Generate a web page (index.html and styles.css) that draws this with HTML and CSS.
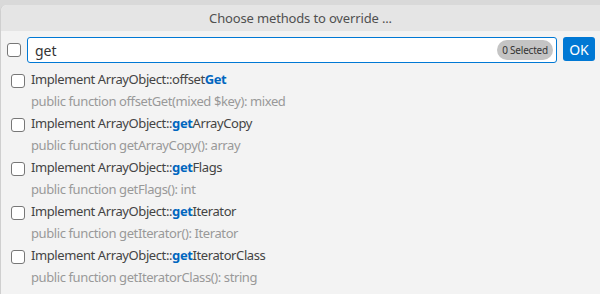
FILE: index.html
```html
<!DOCTYPE html>
<html lang="en">
<head>
  <meta charset="UTF-8" />
  <title>Override methods</title>
  <link rel="stylesheet" href="styles.css">
</head>
<body>

<div class="dialog">
  <div class="header">Choose methods to override ...</div>

  <div class="body">
    <!-- filter row -->
    <div class="search-row">
      <span class="check"></span>
      <div class="search">
        <span class="query">get</span>
        <span class="badge">0 Selected</span>
      </div>
      <button class="ok">OK</button>
    </div>

    <ul class="methods">
      <li>
        <span class="check"></span>
        <div class="info">
          <div class="title">Implement ArrayObject::offset<b>Get</b></div>
          <div class="sig">public function offsetGet(mixed $key): mixed</div>
        </div>
      </li>
      <li>
        <span class="check"></span>
        <div class="info">
          <div class="title">Implement ArrayObject::<b>get</b>ArrayCopy</div>
          <div class="sig">public function getArrayCopy(): array</div>
        </div>
      </li>
      <li>
        <span class="check"></span>
        <div class="info">
          <div class="title">Implement ArrayObject::<b>get</b>Flags</div>
          <div class="sig">public function getFlags(): int</div>
        </div>
      </li>
      <li>
        <span class="check"></span>
        <div class="info">
          <div class="title">Implement ArrayObject::<b>get</b>Iterator</div>
          <div class="sig">public function getIterator(): Iterator</div>
        </div>
      </li>
      <li>
        <span class="check"></span>
        <div class="info">
          <div class="title">Implement ArrayObject::<b>get</b>IteratorClass</div>
          <div class="sig">public function getIteratorClass(): string</div>
        </div>
      </li>
    </ul>
  </div>
</div>

</body>
</html>
```

FILE: styles.css
```css
* {
  margin: 0; padding: 0; box-sizing: border-box;
  font-family: 'Noto Sans', sans-serif;
}

body {
  background: #d9d9d9;
  padding-top: 5px;
  overflow: hidden;
}

.dialog {
  background: #f3f3f3;
  border-left: 1px solid #cfcfcf;
  border-radius: 6px 0 0 0;
  height: 300px;
}

.header {
  height: 26px;
  background: #e5e5e5;
  border-radius: 6px 0 0 0;
  color: #505050;
  font-size: 13px;
  letter-spacing: -0.15px;
  line-height: 26px;
  text-align: center;
}

.body {
  padding: 6px 5px 0 6px;
}

.search-row {
  display: flex;
  align-items: center;
  height: 26px;
}

.check {
  width: 14px;
  height: 14px;
  border: 1px solid #777;
  border-radius: 3px;
  background: #fff;
  flex: none;
}

.search {
  flex: 1;
  height: 26px;
  margin-left: 6px;
  margin-right: 6px;
  background: #fff;
  border: 1px solid #0078d4;
  border-radius: 3px;
  display: flex;
  align-items: center;
  justify-content: space-between;
  padding: 0 3px 0 7px;
}

.query {
  font-size: 14px;
  color: #333;
}

.badge {
  background: #c4c4c4;
  color: #333;
  font-size: 10px;
  letter-spacing: -0.2px;
  border-radius: 10px;
  padding: 0 5px;
  height: 20px;
  line-height: 20px;
}

.ok {
  width: 32px;
  height: 24px;
  background: #0078d4;
  color: #fff;
  border: none;
  border-radius: 3px;
  font-size: 14px;
  margin-top: -2px;
}

.methods {
  list-style: none;
  margin-top: 6px;
  padding-left: 4px;
}

.methods li {
  display: flex;
  align-items: flex-start;
  height: 44px;
}

.methods .check {
  margin-top: 5px;
}

.info {
  margin-left: 6px;
  letter-spacing: -0.4px;
}

.title {
  font-size: 13px;
  color: #444;
  line-height: 21px;
}

.title b {
  color: #0066bf;
}

.sig {
  font-size: 13px;
  color: #999;
  line-height: 22px;
}
```
